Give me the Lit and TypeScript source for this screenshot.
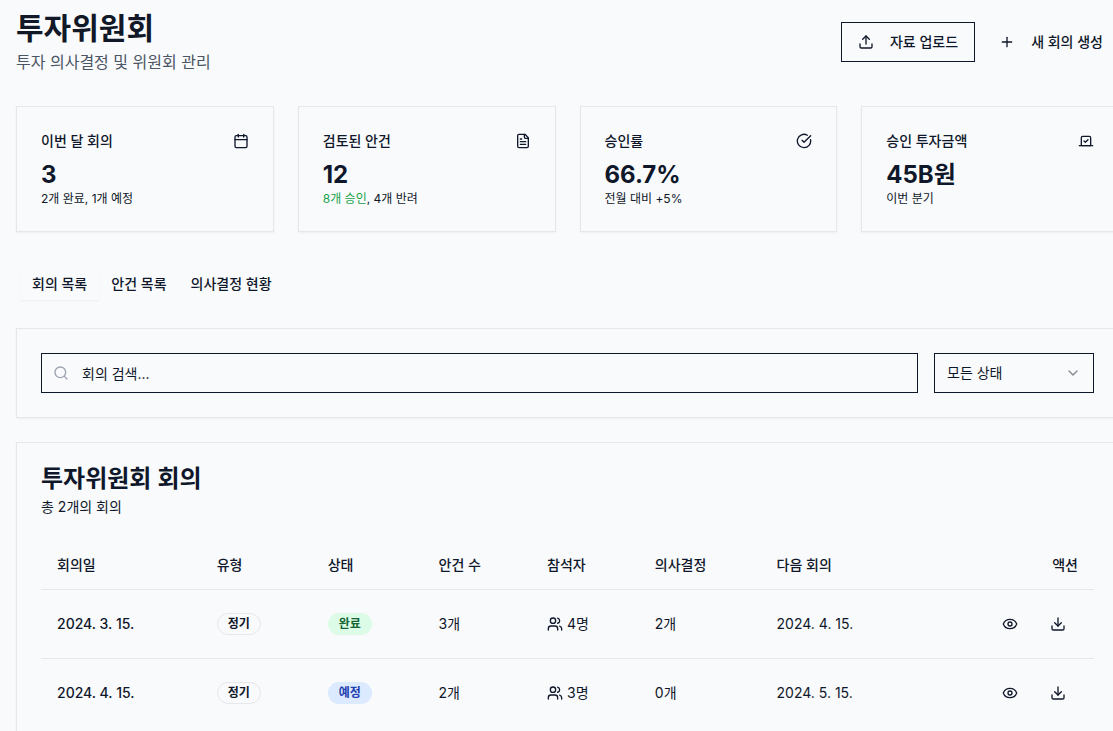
import { LitElement, html, css, svg, nothing } from "lit";
import { customElement, state } from "lit/decorators.js";

const icons = {
  upload: svg`<path d="M21 15v4a2 2 0 0 1-2 2H5a2 2 0 0 1-2-2v-4"/><polyline points="17 8 12 3 7 8"/><line x1="12" x2="12" y1="3" y2="15"/>`,
  plus: svg`<path d="M5 12h14"/><path d="M12 5v14"/>`,
  calendar: svg`<path d="M8 2v4"/><path d="M16 2v4"/><rect width="18" height="18" x="3" y="4" rx="2"/><path d="M3 10h18"/>`,
  file: svg`<path d="M15 2H6a2 2 0 0 0-2 2v16a2 2 0 0 0 2 2h12a2 2 0 0 0 2-2V7Z"/><path d="M14 2v4a2 2 0 0 0 2 2h4"/><path d="M10 9H8"/><path d="M16 13H8"/><path d="M16 17H8"/>`,
  check: svg`<path d="M21.801 10A10 10 0 1 1 17 3.335"/><path d="m9 11 3 3L22 4"/>`,
  vote: svg`<path d="m9 12 2 2 4-4"/><path d="M5 7c0-1.1.9-2 2-2h10a2 2 0 0 1 2 2v12H5V7Z"/><path d="M22 19H2"/>`,
  search: svg`<circle cx="11" cy="11" r="8"/><path d="m21 21-4.3-4.3"/>`,
  chevron: svg`<path d="m6 9 6 6 6-6"/>`,
  users: svg`<path d="M16 21v-2a4 4 0 0 0-4-4H6a4 4 0 0 0-4 4v2"/><circle cx="9" cy="7" r="4"/><path d="M22 21v-2a4 4 0 0 0-3-3.87"/><path d="M16 3.13a4 4 0 0 1 0 7.75"/>`,
  eye: svg`<path d="M2.062 12.348a1 1 0 0 1 0-.696 10.75 10.75 0 0 1 19.876 0 1 1 0 0 1 0 .696 10.75 10.75 0 0 1-19.876 0"/><circle cx="12" cy="12" r="3"/>`,
  download: svg`<path d="M21 15v4a2 2 0 0 1-2 2H5a2 2 0 0 1-2-2v-4"/><polyline points="7 10 12 15 17 10"/><line x1="12" x2="12" y1="15" y2="3"/>`,
};

const icon = (name: keyof typeof icons) => html`<svg
  class="icon" width="16" height="16" viewBox="0 0 24 24" fill="none" stroke="currentColor"
  stroke-width="2" stroke-linecap="round" stroke-linejoin="round" aria-hidden="true"
>${icons[name]}</svg>`;

interface Stat {
  label: string;
  icon: keyof typeof icons;
  value: string;
  good?: string;
  note: string;
}

const stats: Stat[] = [
  { label: "이번 달 회의", icon: "calendar", value: "3", note: "2개 완료, 1개 예정" },
  { label: "검토된 안건", icon: "file", value: "12", good: "8개 승인", note: ", 4개 반려" },
  { label: "승인률", icon: "check", value: "66.7%", note: "전월 대비 +5%" },
  { label: "승인 투자금액", icon: "vote", value: "45B원", note: "이번 분기" },
];

const meetings = [
  { date: "2024. 3. 15.", type: "정기", status: "완료", tone: "done", agenda: 3, people: 4, decisions: 2, next: "2024. 4. 15." },
  { date: "2024. 4. 15.", type: "정기", status: "예정", tone: "planned", agenda: 2, people: 3, decisions: 0, next: "2024. 5. 15." },
];

const tabs = ["회의 목록", "안건 목록", "의사결정 현황"];

@customElement("app-root")
export class AppRoot extends LitElement {
  @state() private tab = 0;

  static styles = css`
    :host {
      display: block;
      min-height: 100vh;
      overflow: hidden;
      background: #f9fafc;
      color: #0f172a;
      font-family: Inter, "Noto Sans CJK KR", sans-serif;
      font-size: 14px;
      line-height: 20px;
    }
    * { box-sizing: border-box; }
    h1, h2, h3, p { margin: 0; }
    button, input, select { font: inherit; color: inherit; margin: 0; }
    .icon { flex: none; display: block; }
    .page { margin: 0 -6px 0 16px; padding: 10px 0 0; }
    .header { display: flex; justify-content: space-between; align-items: center; margin-bottom: 32px; }
    .title { font-size: 30px; line-height: 36px; font-weight: 700; color: #111827; }
    .subtitle { margin-top: 4px; font-size: 16px; line-height: 24px; color: #4b5563; }
    .buttons { display: flex; gap: 8px; }
    .button {
      display: flex; align-items: center; gap: 16px; height: 40px; padding: 0 16px;
      border: 0; background: transparent; font-weight: 500; cursor: pointer;
    }
    .outlined { border: 1px solid #0f172a; }
    .card { border: 1px solid #e5e7eb; padding: 24px; box-shadow: 0 1px 2px rgba(0, 0, 0, 0.05); }
    .stats { display: grid; grid-template-columns: repeat(4, 1fr); gap: 24px; margin-bottom: 32px; }
    .stat-head { display: flex; justify-content: space-between; align-items: center; margin-bottom: 8px; }
    .stat-label { font-size: 14px; line-height: 20px; font-weight: 500; }
    .stat-value { font-size: 24px; line-height: 32px; font-weight: 700; }
    .stat-note { font-size: 12px; line-height: 16px; }
    .good { color: #16a34a; }
    .tabs { display: flex; padding: 4px; margin-bottom: 24px; }
    .tab { padding: 6px 12px; border: 0; background: transparent; font-weight: 500; cursor: pointer; }
    .selected { box-shadow: 0 1px 2px rgba(0, 0, 0, 0.05); }
    .filters { display: flex; gap: 16px; margin-bottom: 24px; }
    .field { display: grid; align-items: center; }
    .field > * { grid-area: 1 / 1; }
    .field > .icon { pointer-events: none; }
    .search { flex: 1; }
    .search > .icon { margin-left: 12px; color: #9ca3af; }
    .input, .select {
      width: 100%; height: 40px; border: 1px solid #0f172a; border-radius: 0;
      background: transparent; appearance: none;
    }
    .input { padding: 0 12px 0 40px; }
    .input::placeholder { color: #0f172a; opacity: 1; }
    .select { padding: 0 32px 0 12px; }
    .status { width: 160px; }
    .status > .icon { justify-self: end; margin-right: 13px; opacity: 0.5; }
    .list-title { font-size: 24px; line-height: 24px; font-weight: 600; }
    .list-note { margin: 6px 0 24px; }
    .table { width: 100%; border-collapse: collapse; }
    .table th { height: 48px; padding: 0 16px; text-align: left; font-weight: 500; }
    .table td { padding: 16px; }
    .table tr { border-bottom: 1px solid #e5e7eb; }
    .table tbody tr:last-child { border-bottom: 0; }
    .table .end { text-align: right; }
    .table .date { font-weight: 500; }
    .badge {
      display: inline-block; padding: 2px 10px; border: 1px solid #e5e7eb; border-radius: 11px;
      font-size: 12px; line-height: 16px; font-weight: 600; vertical-align: middle;
    }
    .done { background: #dcfce7; border-color: transparent; color: #166534; }
    .planned { background: #dbeafe; border-color: transparent; color: #1e40af; }
    .people { display: flex; align-items: center; gap: 4px; }
    .actions { display: flex; justify-content: flex-end; gap: 8px; }
    .action { height: 36px; padding: 0 12px; border: 0; background: transparent; cursor: pointer; }
  `;

  render() {
    return html`
      <main class="page">
        <header class="header">
          <div>
            <h1 class="title">투자위원회</h1>
            <p class="subtitle">투자 의사결정 및 위원회 관리</p>
          </div>
          <div class="buttons">
            <button class="button outlined">${icon("upload")}자료 업로드</button>
            <button class="button">${icon("plus")}새 회의 생성</button>
          </div>
        </header>

        <section class="stats">
          ${stats.map((s) => html`
            <div class="card">
              <div class="stat-head"><h3 class="stat-label">${s.label}</h3>${icon(s.icon)}</div>
              <div class="stat-value">${s.value}</div>
              <p class="stat-note">${s.good ? html`<span class="good">${s.good}</span>` : nothing}${s.note}</p>
            </div>`)}
        </section>

        <div class="tabs" role="tablist">
          ${tabs.map((t, i) => html`
            <button class="tab ${i === this.tab ? "selected" : ""}" role="tab"
              aria-selected=${i === this.tab ? "true" : "false"} @click=${() => (this.tab = i)}>${t}</button>`)}
        </div>

        <section class="card filters">
          <label class="field search">
            <input class="input" type="text" placeholder="회의 검색..." aria-label="회의 검색" />
            ${icon("search")}
          </label>
          <label class="field status">
            <select class="select" aria-label="상태">
              <option>모든 상태</option>
              <option>완료</option>
              <option>예정</option>
            </select>
            ${icon("chevron")}
          </label>
        </section>

        <section class="card">
          <h2 class="list-title">투자위원회 회의</h2>
          <p class="list-note">총 ${meetings.length}개의 회의</p>
          <table class="table">
            <thead>
              <tr>
                <th>회의일</th><th>유형</th><th>상태</th><th>안건 수</th>
                <th>참석자</th><th>의사결정</th><th>다음 회의</th><th class="end">액션</th>
              </tr>
            </thead>
            <tbody>
              ${meetings.map((m) => html`
                <tr>
                  <td class="date">${m.date}</td>
                  <td><span class="badge">${m.type}</span></td>
                  <td><span class="badge ${m.tone}">${m.status}</span></td>
                  <td>${m.agenda}개</td>
                  <td><div class="people">${icon("users")}<span>${m.people}명</span></div></td>
                  <td>${m.decisions}개</td>
                  <td>${m.next}</td>
                  <td>
                    <div class="actions">
                      <button class="action" aria-label="보기">${icon("eye")}</button>
                      <button class="action" aria-label="다운로드">${icon("download")}</button>
                    </div>
                  </td>
                </tr>`)}
            </tbody>
          </table>
        </section>
      </main>
    `;
  }
}
